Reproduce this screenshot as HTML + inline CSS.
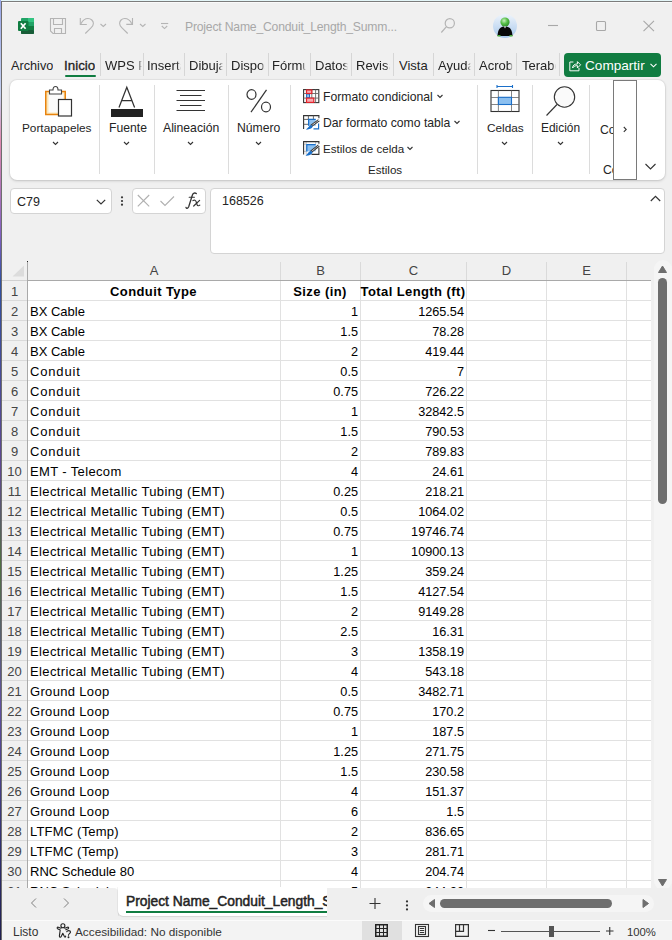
<!DOCTYPE html>
<html><head><meta charset="utf-8">
<style>
*{margin:0;padding:0;box-sizing:border-box}
html,body{width:672px;height:940px;overflow:hidden}
body{position:relative;background:#f0f0f0;font-family:"Liberation Sans",sans-serif;color:#242424}
.a{position:absolute}
svg{position:absolute;overflow:visible}
.ui{position:absolute;font-size:12.5px;white-space:nowrap;line-height:16px}
.tab{position:absolute;top:58px;font-size:13px;line-height:16px;white-space:nowrap;color:#242424;overflow:hidden;-webkit-mask-image:linear-gradient(to right,#000 calc(100% - 4px),transparent)}
.tab.nm{-webkit-mask-image:none}
.tsep{position:absolute;top:53px;width:1px;height:23px;background:#d6d6d6}
.rsep{position:absolute;top:85px;width:1px;height:89px;background:#dcdcdc}
.glab{position:absolute;font-size:12.2px;line-height:16px;white-space:nowrap;color:#242424}
/* grid */
#grid{position:absolute;left:0;top:0;width:672px;height:940px;overflow:hidden}
.rn{position:absolute;left:2px;width:25px;height:20px;padding-top:5px;line-height:14px;text-align:center;font-size:13px;color:#444}
.ct{position:absolute;height:20px;padding-top:4px;line-height:16px;font-size:13px;letter-spacing:0.4px;color:#000;white-space:nowrap}
.ct.r{text-align:right;font-size:12.7px;letter-spacing:0}
.ct.b{font-weight:bold;font-size:13px;-webkit-text-stroke:0}
.ch{position:absolute;top:262px;height:17px;line-height:17px;text-align:center;font-size:13px;color:#444}
</style></head><body>
<!-- window border -->
<div class="a" style="left:0;top:0;width:672px;height:1px;background:#e4f6f8"></div>
<div class="a" style="left:0;top:1px;width:672px;height:1px;background:#7c7c7c"></div>
<div class="a" style="left:0;top:0;width:1px;height:940px;background:linear-gradient(#9aa7e8,#c4d0f0 10%,#e08ab0 15%,#8060c0 25%,#3050a0 30%,#604890 50%,#507040 60%,#6050a0 75%,#303070 90%,#202050)"></div>
<div class="a" style="left:1px;top:1px;width:1px;height:939px;background:#6e6e6e"></div>
<div class="a" style="left:2px;top:2px;width:670px;height:1px;background:#fafafa"></div>

<!-- title bar -->
<svg style="left:18px;top:18px" width="17" height="16" viewBox="0 0 17 16">
  <rect x="3" y="0" width="13" height="16" rx="1" fill="#21a366"/>
  <rect x="10" y="0" width="6" height="4" fill="#33c481"/>
  <rect x="9" y="4" width="7" height="4" fill="#21a366"/>
  <rect x="3" y="8" width="13" height="4" fill="#107c41"/>
  <rect x="3" y="12" width="13" height="4" rx="1" fill="#185c37"/>
  <rect x="0" y="3" width="10.5" height="10" rx="1" fill="#107c41"/>
  <path d="M2.8 5.2 L7.6 10.8 M7.6 5.2 L2.8 10.8" stroke="#fff" stroke-width="1.7"/>
</svg>
<svg style="left:50px;top:18px" width="16" height="16" viewBox="0 0 16 16" fill="none" stroke="#b4b4b4" stroke-width="1.1">
  <path d="M0.5 0.5 H15.5 V15.5 H3 L0.5 13 Z"/>
  <path d="M3.5 0.5 V6.5 H12.5 V0.5"/>
  <path d="M4.5 15.5 V10.5 H11.5 V15.5"/>
</svg>
<svg style="left:79px;top:18px" width="30" height="16" viewBox="0 0 30 16" fill="none" stroke="#b4b4b4" stroke-width="1.1">
  <path d="M1.3 0 V6.5 H7.8"/>
  <path d="M2 5.7 C3.8 2 6.3 0.5 9 0.5 C12 0.5 14.4 2.8 14.4 5.6 C14.4 7.5 13.4 8.6 12 9.9 L6.3 15.5"/>
  <path d="M21.5 6 L24.3 8.5 L27 6"/>
</svg>
<svg style="left:119px;top:18px" width="30" height="16" viewBox="0 0 30 16" fill="none" stroke="#b4b4b4" stroke-width="1.1">
  <path d="M13.5 0 V6.4 H7.3"/>
  <path d="M12.8 5.7 C11 2 8.5 0.5 5.8 0.5 C2.8 0.5 0.6 2.8 0.6 5.6 C0.6 7.5 1.6 8.6 3 9.9 L8.7 15.5"/>
  <path d="M21 6 L23.8 8.5 L26.5 6"/>
</svg>
<svg style="left:160px;top:22px" width="9" height="8" viewBox="0 0 9 8" fill="none" stroke="#b4b4b4" stroke-width="1.1">
  <path d="M1 1.5 H8.2"/>
  <path d="M1.8 4 L4.5 6.6 L7.2 4"/>
</svg>
<div class="ui" style="left:185px;top:19px;font-size:12.2px;letter-spacing:-0.2px;color:#a8a8a8">Project Name_Conduit_Length_Summ...</div>
<svg style="left:440px;top:18px" width="16" height="16" viewBox="0 0 16 16" fill="none" stroke="#b4b4b4" stroke-width="1.2">
  <circle cx="9.8" cy="5.3" r="4.6"/>
  <path d="M6.5 8.6 L1.3 14.5"/>
</svg>
<!-- avatar -->
<svg style="left:493px;top:14px" width="24" height="24" viewBox="0 0 24 24">
  <defs>
    <linearGradient id="av" x1="0" y1="0" x2="0" y2="1"><stop offset="0" stop-color="#eef4fb"/><stop offset="1" stop-color="#a9c9ec"/></linearGradient>
    <radialGradient id="hd" cx="0.4" cy="0.35" r="0.7"><stop offset="0" stop-color="#c8f0c0"/><stop offset="0.5" stop-color="#58c048"/><stop offset="1" stop-color="#2c8a28"/></radialGradient>
  </defs>
  <circle cx="12" cy="12" r="12" fill="url(#av)"/>
  <path d="M4.5 22 C5 15 7 12.5 12 12.5 C17 12.5 19 15 19.5 22 Z" fill="#080808"/>
  <path d="M4.5 21 h3 v1.5 h-3z M16.5 21 h3 v1.5 h-3z" fill="#4cae3c"/>
  <circle cx="12" cy="8" r="4.6" fill="url(#hd)"/>
  <path d="M11 12.5 L12 14.5 L13 12.5" fill="#fff"/>
</svg>
<svg style="left:547px;top:20px" width="110" height="12" viewBox="0 0 110 12" fill="none" stroke="#a8a8a8" stroke-width="1.1">
  <path d="M1 5.5 H11"/>
  <rect x="49.5" y="1.5" width="9" height="9" rx="1"/>
  <path d="M96.5 0.8 L107 11.2 M107 0.8 L96.5 11.2"/>
</svg>

<!-- ribbon tabs -->
<div class="tab nm" style="left:11px;font-size:12.7px">Archivo</div>
<div class="tab nm" style="left:64px;font-size:13.4px;-webkit-text-stroke:0.3px #1f1f1f;color:#1f1f1f">Inicio</div>
<div class="a" style="left:65px;top:75px;width:31px;height:2px;background:#107c41;border-radius:1px"></div>
<div class="tsep" style="left:100px"></div>
<div class="tab" style="left:105px;width:37px">WPS PDF</div>
<div class="tsep" style="left:143px"></div>
<div class="tab" style="left:147px;width:34px">Insertar</div>
<div class="tsep" style="left:184px"></div>
<div class="tab" style="left:189px;width:34px">Dibujar</div>
<div class="tsep" style="left:226px"></div>
<div class="tab" style="left:231px;width:34px">Disposición</div>
<div class="tsep" style="left:268px"></div>
<div class="tab" style="left:272px;width:34px">Fórmulas</div>
<div class="tsep" style="left:310px"></div>
<div class="tab" style="left:315px;width:33px">Datos</div>
<div class="tsep" style="left:351px"></div>
<div class="tab" style="left:356px;width:34px">Revisar</div>
<div class="tsep" style="left:393px"></div>
<div class="tab nm" style="left:399px">Vista</div>
<div class="tsep" style="left:433px"></div>
<div class="tab" style="left:438px;width:33px">Ayuda</div>
<div class="tsep" style="left:474px"></div>
<div class="tab" style="left:479px;width:34px">Acrobat</div>
<div class="tsep" style="left:516px"></div>
<div class="tab" style="left:522px;width:34px">Terabox</div>
<div class="tsep" style="left:559px"></div>
<div class="a" style="left:564px;top:53px;width:97px;height:24px;background:#107c41;border-radius:4px"></div>
<svg style="left:568px;top:60px" width="14" height="12" viewBox="0 0 16 15" fill="none" stroke="#fff" stroke-width="1.2">
  <path d="M6 2.5 H1.5 V13.5 H13 V10"/>
  <path d="M5 10 C5 6 8 5 11 5 V2 L15 6 L11 10 V7 C9 7 6.5 7.5 5 10Z"/>
</svg>
<div class="ui" style="left:585px;top:58px;color:#fff;font-size:13.6px">Compartir</div>
<svg style="left:650px;top:63px" width="7" height="5" viewBox="0 0 7 5" fill="none" stroke="#fff" stroke-width="1.1"><path d="M0.5 0.8 L3.5 3.8 L6.5 0.8"/></svg>

<!-- ribbon -->
<div class="a" style="left:10px;top:80px;width:655px;height:100px;background:#fff;border-radius:7px;box-shadow:0 1px 3px rgba(0,0,0,0.16),0 0 0 1px rgba(0,0,0,0.04)"></div>
<!-- Portapapeles -->
<svg style="left:44px;top:86px" width="29" height="32" viewBox="0 0 29 32">
  <rect x="1.75" y="5.5" width="19.5" height="23" fill="#fce7b8" stroke="#e8830e" stroke-width="1.5"/>
  <rect x="4.5" y="7.5" width="15" height="19" fill="#fbfbfb"/>
  <path d="M5.5 8 V4 H9 C9 1.5 10 0.5 11.5 0.5 C13 0.5 14 1.5 14 4 H17.5 V8 Z" fill="#fff" stroke="#444" stroke-width="1.1"/>
  <rect x="14.5" y="13.5" width="13" height="16.5" fill="#fff" stroke="#333" stroke-width="1.2"/>
</svg>
<div class="glab" style="left:22px;top:120px;font-size:11.8px">Portapapeles</div>
<div class="rsep" style="left:99px"></div>
<!-- Fuente -->
<svg style="left:111px;top:86px" width="33" height="31" viewBox="0 0 33 31">
  <path d="M8 21.4 L15.8 1.2 L23.6 21.4 M11 14.7 H20.6" fill="none" stroke="#333" stroke-width="1.25"/>
  <rect x="0" y="23" width="32" height="8" fill="#222"/>
</svg>
<div class="glab" style="left:109px;top:120px">Fuente</div>
<div class="rsep" style="left:154px"></div>
<!-- Alineacion -->
<svg style="left:176px;top:89px" width="30" height="22" viewBox="0 0 30 22" fill="none" stroke="#333" stroke-width="1.1">
  <path d="M0.5 1.5 H29 M4 6.5 H25.5 M0.5 11.5 H29 M4 16.5 H25.5 M0.5 21.5 H29"/>
</svg>
<div class="glab" style="left:163px;top:120px">Alineación</div>
<div class="rsep" style="left:228px"></div>
<!-- Numero -->
<svg style="left:246px;top:89px" width="26" height="24" viewBox="0 0 26 24" fill="none" stroke="#333" stroke-width="1.2">
  <ellipse cx="5.5" cy="5.5" rx="4.5" ry="4.8"/>
  <ellipse cx="20" cy="18" rx="4.5" ry="4.8"/>
  <path d="M20.5 0.8 L5 23.2"/>
</svg>
<div class="glab" style="left:237px;top:120px">Número</div>
<div class="rsep" style="left:290px"></div>
<!-- chevrons -->
<svg style="left:0;top:0" width="672" height="180" viewBox="0 0 672 180" fill="none" stroke="#333" stroke-width="1.1">
  <path d="M53 142 L55.5 144.5 L58 142"/>
  <path d="M124 142 L126.5 144.5 L129 142"/>
  <path d="M188 142 L190.5 144.5 L193 142"/>
  <path d="M256 142 L258.5 144.5 L261 142"/>
  <path d="M502 142 L504.5 144.5 L507 142"/>
  <path d="M558 142 L560.5 144.5 L563 142"/>
  <path d="M437.5 95 L440 97.5 L442.5 95"/>
  <path d="M454.5 121 L457 123.5 L459.5 121"/>
  <path d="M407.5 147 L410 149.5 L412.5 147"/>
  <path d="M645.5 164 L650.5 169 L655.5 164"/>
</svg>
<!-- Estilos -->
<svg style="left:303px;top:89px" width="17" height="15" viewBox="0 0 17 15" fill="none">
  <rect x="0.6" y="0.6" width="15.2" height="13" fill="#fff" stroke="#333" stroke-width="1.1"/>
  <path d="M12.6 0.6 V13.6 M8.8 0.6 V13.6 M0.6 4.5 H15.8 M0.6 9.1 H15.8" stroke="#666" stroke-width="0.9"/>
  <rect x="3.6" y="4.9" width="2.9" height="3.8" fill="#a0ccf4" stroke="#1a6fc9" stroke-width="1.1"/>
  <rect x="3.5" y="1" width="5.3" height="3.5" fill="#f7a8b0" stroke="#e3242b" stroke-width="1.2"/>
  <rect x="3.5" y="9.1" width="7.3" height="4.3" fill="#f7a8b0" stroke="#e3242b" stroke-width="1.2"/>
</svg>
<svg style="left:303px;top:115px" width="17" height="15" viewBox="0 0 17 15" fill="none">
  <path d="M0.6 14 V0.6 H15.9 V3.2" stroke="#333" stroke-width="1.1"/>
  <path d="M5.4 0.6 V4.2 M10.4 0.6 V4.2 M0.6 4.4 H5.2 M0.6 9.3 H5.2" stroke="#555" stroke-width="0.9"/>
  <rect x="5.2" y="4" width="7.5" height="6.8" fill="#8cc0f0"/>
  <path d="M5.6 10.8 V4.3 H12.7" stroke="#1a6fc9" stroke-width="1.2"/>
  <path d="M15.6 8.5 V13.9 H10.5" stroke="#1a6fc9" stroke-width="1.2"/>
  <path d="M15.9 5.2 L8 11" stroke="#3a3a3a" stroke-width="2.6"/>
  <path d="M15.9 5.2 L8 11" stroke="#fff" stroke-width="1" stroke-dasharray="1 0.6"/>
  <path d="M3 14.6 C5.5 14.8 8.8 14 9.8 11.6 L8.2 10 C6 10.4 5.6 12.6 3 14.6Z" fill="#1a6fc9"/>
</svg>
<svg style="left:303px;top:141px" width="17" height="15" viewBox="0 0 17 15" fill="none">
  <path d="M3.2 0.6 V13.4 M12.7 0.6 V3 M0.6 3.2 H3.2 M0.6 10.4 H3.2" stroke="#bbb" stroke-width="0.9"/>
  <path d="M0.6 13.6 V0.6 H15.9 V2.8 M15.9 6.5 V13.4 H8.5" stroke="#333" stroke-width="1.1"/>
  <rect x="3.4" y="3.2" width="9.3" height="7.2" fill="#8cc0f0"/>
  <path d="M3.8 10.4 V3.6 H12.7" stroke="#1a6fc9" stroke-width="1.2"/>
  <path d="M15.9 4.4 L8 10.8" stroke="#3a3a3a" stroke-width="2.6"/>
  <path d="M15.9 4.4 L8 10.8" stroke="#fff" stroke-width="1" stroke-dasharray="1 0.6"/>
  <path d="M2.5 14.6 C5 14.8 8.5 14 9.6 11.4 L8 9.8 C5.8 10.2 5.2 12.6 2.5 14.6Z" fill="#1a6fc9"/>
</svg>
<div class="glab" style="left:323px;top:89px;font-size:12.2px">Formato condicional</div>
<div class="glab" style="left:323px;top:115px;font-size:12.2px">Dar formato como tabla</div>
<div class="glab" style="left:323px;top:141px;font-size:11.6px">Estilos de celda</div>
<div class="glab" style="left:368px;top:162px;font-size:11.6px">Estilos</div>
<div class="rsep" style="left:477px"></div>
<!-- Celdas -->
<svg style="left:490px;top:85px" width="30" height="28" viewBox="0 0 30 28">
  <path d="M7 1.5 H22.5 M7 0 V3 M22.5 0 V3" stroke="#1a6fc9" stroke-width="1.1" fill="none"/>
  <rect x="1" y="5.5" width="28" height="21" fill="#fff" stroke="#333" stroke-width="1.1"/>
  <path d="M8.4 5.5 V26.5 M21.5 5.5 V26.5 M1 12.5 H29 M1 19.5 H29" stroke="#666" stroke-width="0.8" fill="none"/>
  <rect x="8.4" y="12.3" width="13.1" height="7.2" fill="#8cc0f0" stroke="#1a6fc9" stroke-width="1.1"/>
</svg>
<div class="glab" style="left:487px;top:120px;font-size:11.8px">Celdas</div>
<div class="rsep" style="left:532px"></div>
<!-- Edicion -->
<svg style="left:545px;top:86px" width="32" height="31" viewBox="0 0 32 31" fill="none" stroke="#333" stroke-width="1.1">
  <circle cx="19.5" cy="11" r="10.2" fill="#fafafa"/>
  <path d="M12 18.5 L1.5 29.5"/>
</svg>
<div class="glab" style="left:541px;top:120px;font-size:11.9px">Edición</div>
<div class="rsep" style="left:589px"></div>
<div class="glab" style="left:600px;top:122px;width:13px;overflow:hidden">Co</div>
<div class="glab" style="left:603px;top:162px;width:10px;overflow:hidden">Co</div>
<div class="a" style="left:613px;top:80px;width:24px;height:100px;background:#fff;border:1px solid #7a7a7a"></div>
<svg style="left:623px;top:126px" width="5" height="8" viewBox="0 0 5 8" fill="none" stroke="#333" stroke-width="1.1"><path d="M0.8 1 L3.2 3.4 L0.8 5.8"/></svg>

<!-- formula bar -->
<div class="a" style="left:10px;top:188px;width:102px;height:26px;background:#fff;border:1px solid #d4d4d4;border-radius:4px"></div>
<div class="ui" style="left:17px;top:194px;font-size:12.5px;color:#242424">C79</div>
<svg style="left:96px;top:199px" width="10" height="6" viewBox="0 0 10 6" fill="none" stroke="#333" stroke-width="1.2"><path d="M0.8 0.8 L5 5 L9.2 0.8"/></svg>
<svg style="left:120px;top:196px" width="4" height="10" viewBox="0 0 4 10" fill="#333"><circle cx="2" cy="1.3" r="1.1"/><circle cx="2" cy="5" r="1.1"/><circle cx="2" cy="8.7" r="1.1"/></svg>
<div class="a" style="left:132px;top:188px;width:74px;height:26px;background:#fff;border:1px solid #d4d4d4;border-radius:4px"></div>
<svg style="left:137px;top:194px" width="66" height="14" viewBox="0 0 66 14" fill="none" stroke="#b0b0b0" stroke-width="1.1">
  <path d="M0.8 1 L12.2 12.4 M12.2 1 L0.8 12.4"/>
  <path d="M23.5 7 L28 11.5 L37 2.5"/>
</svg>
<svg style="left:180px;top:190px" width="30" height="22" viewBox="0 0 30 22" fill="none" stroke="#333" stroke-linecap="round">
  <path d="M6 17.3 C6.4 18.9 7.9 18.7 8.7 16.8 L12.4 5 C13.1 3 14.9 2.5 16.3 3.6" stroke-width="1.3"/>
  <path d="M9.2 7.3 H14.4" stroke-width="1.1"/>
  <path d="M13 10.6 C14.5 9.7 15.6 10.1 16.1 11.6 L17.1 14.7 C17.6 16 18.7 16.1 19.8 15.1" stroke-width="1.2"/>
  <path d="M19.6 10.4 L13.7 16" stroke-width="1.2"/>
</svg>
<div class="a" style="left:210px;top:188px;width:455px;height:66px;background:#fff;border:1px solid #d4d4d4;border-radius:4px"></div>
<div class="ui" style="left:222px;top:193px;font-size:12.5px;color:#242424">168526</div>
<svg style="left:650px;top:195px" width="11" height="7" viewBox="0 0 11 7" fill="none" stroke="#333" stroke-width="1.2"><path d="M0.8 6 L5.5 1.3 L10.2 6"/></svg>

<!-- GRID -->
<div class="a" style="left:28px;top:281px;width:623px;height:607px;background:#fff"></div>
<svg style="left:0;top:0" width="672" height="940" viewBox="0 0 672 940">
  <g stroke="#e1e1e1" stroke-width="1">
    <path d="M280.5 281 V888 M360.5 281 V888 M466.5 281 V888 M546.5 281 V888 M626.5 281 V888"/>
    <path d="M28 300.5 H651 M28 320.5 H651 M28 340.5 H651 M28 360.5 H651 M28 380.5 H651 M28 400.5 H651 M28 420.5 H651 M28 440.5 H651 M28 460.5 H651 M28 480.5 H651 M28 500.5 H651 M28 520.5 H651 M28 540.5 H651 M28 560.5 H651 M28 580.5 H651 M28 600.5 H651 M28 620.5 H651 M28 640.5 H651 M28 660.5 H651 M28 680.5 H651 M28 700.5 H651 M28 720.5 H651 M28 740.5 H651 M28 760.5 H651 M28 780.5 H651 M28 800.5 H651 M28 820.5 H651 M28 840.5 H651 M28 860.5 H651 M28 880.5 H651"/>
  </g>
  <g stroke="#dadada" stroke-width="1">
    <path d="M2 300.5 H27 M2 320.5 H27 M2 340.5 H27 M2 360.5 H27 M2 380.5 H27 M2 400.5 H27 M2 420.5 H27 M2 440.5 H27 M2 460.5 H27 M2 480.5 H27 M2 500.5 H27 M2 520.5 H27 M2 540.5 H27 M2 560.5 H27 M2 580.5 H27 M2 600.5 H27 M2 620.5 H27 M2 640.5 H27 M2 660.5 H27 M2 680.5 H27 M2 700.5 H27 M2 720.5 H27 M2 740.5 H27 M2 760.5 H27 M2 780.5 H27 M2 800.5 H27 M2 820.5 H27 M2 840.5 H27 M2 860.5 H27 M2 880.5 H27"/>
    <path d="M280.5 262 V280 M360.5 262 V280 M466.5 262 V280 M546.5 262 V280 M626.5 262 V280"/>
  </g>
  <path d="M27.5 262 V888" stroke="#a9a9a9"/><rect x="27" y="261" width="1" height="1" fill="#222"/>
  <path d="M2 280.5 H27" stroke="#d0d0d0"/><path d="M27 280.5 H651" stroke="#a9a9a9"/>
  <path d="M12.5 276.5 H24 V265.5 Z" fill="#dcdcdc"/>
</svg>
<div class="ch" style="left:28px;width:252px">A</div>
<div class="ch" style="left:281px;width:79px">B</div>
<div class="ch" style="left:361px;width:105px">C</div>
<div class="ch" style="left:467px;width:79px">D</div>
<div class="ch" style="left:547px;width:79px">E</div>
<div id="grid">
<div class="rn" style="top:280px">1</div>
<div class="ct b" style="top:280px;left:27px;width:253px;text-align:center">Conduit Type</div>
<div class="ct b" style="top:280px;left:280px;width:80px;text-align:center">Size (in)</div>
<div class="ct b" style="top:280px;left:360px;width:106px;text-align:center">Total Length (ft)</div>
<div class="rn" style="top:300px">2</div>
<div class="ct" style="top:300px;left:30px;letter-spacing:0.0px">BX Cable</div>
<div class="ct r" style="top:300px;left:280px;width:78px">1</div>
<div class="ct r" style="top:300px;left:360px;width:104px">1265.54</div>
<div class="rn" style="top:320px">3</div>
<div class="ct" style="top:320px;left:30px;letter-spacing:0.0px">BX Cable</div>
<div class="ct r" style="top:320px;left:280px;width:78px">1.5</div>
<div class="ct r" style="top:320px;left:360px;width:104px">78.28</div>
<div class="rn" style="top:340px">4</div>
<div class="ct" style="top:340px;left:30px;letter-spacing:0.0px">BX Cable</div>
<div class="ct r" style="top:340px;left:280px;width:78px">2</div>
<div class="ct r" style="top:340px;left:360px;width:104px">419.44</div>
<div class="rn" style="top:360px">5</div>
<div class="ct" style="top:360px;left:30px;letter-spacing:0.83px">Conduit</div>
<div class="ct r" style="top:360px;left:280px;width:78px">0.5</div>
<div class="ct r" style="top:360px;left:360px;width:104px">7</div>
<div class="rn" style="top:380px">6</div>
<div class="ct" style="top:380px;left:30px;letter-spacing:0.83px">Conduit</div>
<div class="ct r" style="top:380px;left:280px;width:78px">0.75</div>
<div class="ct r" style="top:380px;left:360px;width:104px">726.22</div>
<div class="rn" style="top:400px">7</div>
<div class="ct" style="top:400px;left:30px;letter-spacing:0.83px">Conduit</div>
<div class="ct r" style="top:400px;left:280px;width:78px">1</div>
<div class="ct r" style="top:400px;left:360px;width:104px">32842.5</div>
<div class="rn" style="top:420px">8</div>
<div class="ct" style="top:420px;left:30px;letter-spacing:0.83px">Conduit</div>
<div class="ct r" style="top:420px;left:280px;width:78px">1.5</div>
<div class="ct r" style="top:420px;left:360px;width:104px">790.53</div>
<div class="rn" style="top:440px">9</div>
<div class="ct" style="top:440px;left:30px;letter-spacing:0.83px">Conduit</div>
<div class="ct r" style="top:440px;left:280px;width:78px">2</div>
<div class="ct r" style="top:440px;left:360px;width:104px">789.83</div>
<div class="rn" style="top:460px">10</div>
<div class="ct" style="top:460px;left:30px;letter-spacing:0.36px">EMT - Telecom</div>
<div class="ct r" style="top:460px;left:280px;width:78px">4</div>
<div class="ct r" style="top:460px;left:360px;width:104px">24.61</div>
<div class="rn" style="top:480px">11</div>
<div class="ct" style="top:480px;left:30px;letter-spacing:0.38px">Electrical Metallic Tubing (EMT)</div>
<div class="ct r" style="top:480px;left:280px;width:78px">0.25</div>
<div class="ct r" style="top:480px;left:360px;width:104px">218.21</div>
<div class="rn" style="top:500px">12</div>
<div class="ct" style="top:500px;left:30px;letter-spacing:0.38px">Electrical Metallic Tubing (EMT)</div>
<div class="ct r" style="top:500px;left:280px;width:78px">0.5</div>
<div class="ct r" style="top:500px;left:360px;width:104px">1064.02</div>
<div class="rn" style="top:520px">13</div>
<div class="ct" style="top:520px;left:30px;letter-spacing:0.38px">Electrical Metallic Tubing (EMT)</div>
<div class="ct r" style="top:520px;left:280px;width:78px">0.75</div>
<div class="ct r" style="top:520px;left:360px;width:104px">19746.74</div>
<div class="rn" style="top:540px">14</div>
<div class="ct" style="top:540px;left:30px;letter-spacing:0.38px">Electrical Metallic Tubing (EMT)</div>
<div class="ct r" style="top:540px;left:280px;width:78px">1</div>
<div class="ct r" style="top:540px;left:360px;width:104px">10900.13</div>
<div class="rn" style="top:560px">15</div>
<div class="ct" style="top:560px;left:30px;letter-spacing:0.38px">Electrical Metallic Tubing (EMT)</div>
<div class="ct r" style="top:560px;left:280px;width:78px">1.25</div>
<div class="ct r" style="top:560px;left:360px;width:104px">359.24</div>
<div class="rn" style="top:580px">16</div>
<div class="ct" style="top:580px;left:30px;letter-spacing:0.38px">Electrical Metallic Tubing (EMT)</div>
<div class="ct r" style="top:580px;left:280px;width:78px">1.5</div>
<div class="ct r" style="top:580px;left:360px;width:104px">4127.54</div>
<div class="rn" style="top:600px">17</div>
<div class="ct" style="top:600px;left:30px;letter-spacing:0.38px">Electrical Metallic Tubing (EMT)</div>
<div class="ct r" style="top:600px;left:280px;width:78px">2</div>
<div class="ct r" style="top:600px;left:360px;width:104px">9149.28</div>
<div class="rn" style="top:620px">18</div>
<div class="ct" style="top:620px;left:30px;letter-spacing:0.38px">Electrical Metallic Tubing (EMT)</div>
<div class="ct r" style="top:620px;left:280px;width:78px">2.5</div>
<div class="ct r" style="top:620px;left:360px;width:104px">16.31</div>
<div class="rn" style="top:640px">19</div>
<div class="ct" style="top:640px;left:30px;letter-spacing:0.38px">Electrical Metallic Tubing (EMT)</div>
<div class="ct r" style="top:640px;left:280px;width:78px">3</div>
<div class="ct r" style="top:640px;left:360px;width:104px">1358.19</div>
<div class="rn" style="top:660px">20</div>
<div class="ct" style="top:660px;left:30px;letter-spacing:0.38px">Electrical Metallic Tubing (EMT)</div>
<div class="ct r" style="top:660px;left:280px;width:78px">4</div>
<div class="ct r" style="top:660px;left:360px;width:104px">543.18</div>
<div class="rn" style="top:680px">21</div>
<div class="ct" style="top:680px;left:30px;letter-spacing:0.33px">Ground Loop</div>
<div class="ct r" style="top:680px;left:280px;width:78px">0.5</div>
<div class="ct r" style="top:680px;left:360px;width:104px">3482.71</div>
<div class="rn" style="top:700px">22</div>
<div class="ct" style="top:700px;left:30px;letter-spacing:0.33px">Ground Loop</div>
<div class="ct r" style="top:700px;left:280px;width:78px">0.75</div>
<div class="ct r" style="top:700px;left:360px;width:104px">170.2</div>
<div class="rn" style="top:720px">23</div>
<div class="ct" style="top:720px;left:30px;letter-spacing:0.33px">Ground Loop</div>
<div class="ct r" style="top:720px;left:280px;width:78px">1</div>
<div class="ct r" style="top:720px;left:360px;width:104px">187.5</div>
<div class="rn" style="top:740px">24</div>
<div class="ct" style="top:740px;left:30px;letter-spacing:0.33px">Ground Loop</div>
<div class="ct r" style="top:740px;left:280px;width:78px">1.25</div>
<div class="ct r" style="top:740px;left:360px;width:104px">271.75</div>
<div class="rn" style="top:760px">25</div>
<div class="ct" style="top:760px;left:30px;letter-spacing:0.33px">Ground Loop</div>
<div class="ct r" style="top:760px;left:280px;width:78px">1.5</div>
<div class="ct r" style="top:760px;left:360px;width:104px">230.58</div>
<div class="rn" style="top:780px">26</div>
<div class="ct" style="top:780px;left:30px;letter-spacing:0.33px">Ground Loop</div>
<div class="ct r" style="top:780px;left:280px;width:78px">4</div>
<div class="ct r" style="top:780px;left:360px;width:104px">151.37</div>
<div class="rn" style="top:800px">27</div>
<div class="ct" style="top:800px;left:30px;letter-spacing:0.33px">Ground Loop</div>
<div class="ct r" style="top:800px;left:280px;width:78px">6</div>
<div class="ct r" style="top:800px;left:360px;width:104px">1.5</div>
<div class="rn" style="top:820px">28</div>
<div class="ct" style="top:820px;left:30px;letter-spacing:0.19px">LTFMC (Temp)</div>
<div class="ct r" style="top:820px;left:280px;width:78px">2</div>
<div class="ct r" style="top:820px;left:360px;width:104px">836.65</div>
<div class="rn" style="top:840px">29</div>
<div class="ct" style="top:840px;left:30px;letter-spacing:0.19px">LTFMC (Temp)</div>
<div class="ct r" style="top:840px;left:280px;width:78px">3</div>
<div class="ct r" style="top:840px;left:360px;width:104px">281.71</div>
<div class="rn" style="top:860px">30</div>
<div class="ct" style="top:860px;left:30px;letter-spacing:0.01px">RNC Schedule 80</div>
<div class="ct r" style="top:860px;left:280px;width:78px">4</div>
<div class="ct r" style="top:860px;left:360px;width:104px">204.74</div>
<div class="rn" style="top:880px">31</div>
<div class="ct" style="top:880px;left:30px;letter-spacing:0.01px">RNC Schedule 80</div>
<div class="ct r" style="top:880px;left:280px;width:78px">5</div>
<div class="ct r" style="top:880px;left:360px;width:104px">244.92</div>
</div>
<!-- vertical scrollbar -->
<div class="a" style="left:654px;top:260px;width:18px;height:630px;background:#f5f5f5;border-radius:9px"></div>
<svg style="left:654px;top:260px" width="18" height="630" viewBox="0 0 18 630" fill="#6e6e6e">
  <path d="M4.5 12.5 L8.5 6 L12.5 12.5 Z" stroke="#6e6e6e" stroke-width="1" stroke-linejoin="round"/>
  <rect x="4" y="18" width="9" height="226" rx="4.5"/>
  <path d="M4.5 619.5 L8.5 626 L12.5 619.5 Z" stroke="#6e6e6e" stroke-width="1" stroke-linejoin="round"/>
</svg>
<!-- sheet bar -->
<div class="a" style="left:100px;top:888px;width:30px;height:10px;background:#fff"></div>
<div class="a" style="left:2px;top:888px;width:116px;height:32px;background:#efefef;border-radius:0 5px 0 0;box-shadow:1px 0 0 rgba(0,0,0,0.05)"></div>
<div class="a" style="left:2px;top:916px;width:670px;height:4px;background:#efefef"></div>
<svg style="left:0;top:888px" width="120" height="32" viewBox="0 0 120 32" fill="none" stroke="#808080" stroke-width="1">
  <path d="M36 10.5 L31.5 15 L36 19.5"/>
  <path d="M64 10.5 L68.5 15 L64 19.5" />
</svg>
<div class="a" style="left:118px;top:887px;width:216px;height:29px;background:#fff;border-radius:0 0 5px 5px;box-shadow:0 1px 1px rgba(0,0,0,0.10),-1px 0 0 rgba(0,0,0,0.04)"></div>
<div class="a" style="left:126px;top:894px;width:201px;overflow:hidden;white-space:nowrap;font-size:13.8px;-webkit-text-stroke:0.5px #242424;line-height:16px;color:#242424">Project Name_Conduit_Length_Summary</div>
<div class="a" style="left:126px;top:911px;width:201px;height:2px;background:#107c41"></div>
<div class="a" style="left:327px;top:888px;width:345px;height:32px;background:#efefef"></div>
<svg style="left:0;top:888px" width="672" height="32" viewBox="0 0 672 32" fill="none" stroke="#333" stroke-width="1.1">
  <path d="M375 10 V21 M369.5 15.5 H380.5"/>
</svg>
<svg style="left:405px;top:900px" width="4" height="11" viewBox="0 0 4 11" fill="#333"><circle cx="2" cy="1.4" r="1.1"/><circle cx="2" cy="5.4" r="1.1"/><circle cx="2" cy="9.4" r="1.1"/></svg>
<div class="a" style="left:423px;top:895px;width:231px;height:17px;background:#f5f5f5;border-radius:9px"></div>
<svg style="left:423px;top:895px" width="231" height="17" viewBox="0 0 231 17" fill="#6e6e6e">
  <path d="M11.5 4.5 L6 8.5 L11.5 12.5 Z" stroke="#6e6e6e" stroke-linejoin="round"/>
  <rect x="17" y="4" width="172" height="9" rx="4.5"/>
  <path d="M220 4.5 L225.5 8.5 L220 12.5 Z" stroke="#6e6e6e" stroke-linejoin="round"/>
</svg>
<!-- status bar -->
<div class="a" style="left:2px;top:920px;width:670px;height:1px;background:#fbfbfb"></div>
<div class="a" style="left:2px;top:921px;width:670px;height:19px;background:#f3f3f3"></div>
<div class="ui" style="left:13px;top:924px;font-size:12px;color:#333">Listo</div>
<svg style="left:52px;top:920px" width="24" height="20" viewBox="0 0 24 20" fill="none" stroke="#222" stroke-width="1.1" stroke-linejoin="round" stroke-linecap="round">
  <circle cx="10.9" cy="5.8" r="2"/>
  <path d="M9 8.2 L6.3 7.2 C5.3 6.9 4.7 8.1 5.6 8.7 L8.2 10 L7.4 15.8 C7.2 17.3 8.6 17.8 9.2 16.5 L10.8 13.2 L12.4 16.5 C13 17.6 13.8 17 13.6 16"/>
  <path d="M12.8 8.2 L15.5 7.2 C16.5 6.9 17.1 8.1 16.2 8.7 L13.8 9.8"/>
  <path d="M14.8 11.8 C14.8 10.2 18.5 10.2 18.5 11.9 C18.5 13.3 16.5 13.4 16.5 15.3"/>
  <circle cx="16.5" cy="17.3" r="0.4" fill="#222"/>
</svg>
<div class="ui" style="left:75px;top:924px;font-size:11.8px;color:#333">Accesibilidad: No disponible</div>
<div class="a" style="left:362px;top:921px;width:40px;height:19px;background:#e0e0e0"></div>
<svg style="left:375px;top:924px" width="13" height="13" viewBox="0 0 13 13" fill="none" stroke="#222">
  <rect x="0.75" y="0.75" width="11.5" height="11.5" stroke-width="1.5"/>
  <path d="M4.5 0.5 V12.5 M8.5 0.5 V12.5 M0.5 4.5 H12.5 M0.5 8.5 H12.5" stroke-width="1"/>
</svg>
<svg style="left:415px;top:924px" width="14" height="13" viewBox="0 0 14 13" fill="none" stroke="#333" stroke-width="1.1">
  <rect x="0.5" y="0.5" width="13" height="12"/>
  <rect x="3.5" y="2.5" width="7" height="8"/>
  <path d="M5.2 4.5 H8.8 M5.2 6.5 H8.8 M5.2 8.5 H8.8" stroke-width="1" stroke-linecap="round"/>
</svg>
<svg style="left:455px;top:924px" width="14" height="13" viewBox="0 0 14 13" fill="none" stroke="#333" stroke-width="1.1">
  <path d="M0.6 0.6 H13.4 V12.4 H0.6 Z M4.5 0.6 V7.3 M8.5 0.6 V7.3 H0.6" stroke-width="1.2"/>
</svg>
<svg style="left:486px;top:924px" width="130" height="14" viewBox="0 0 130 14" fill="none" stroke="#333" stroke-width="1.1">
  <path d="M2 6.5 H9"/>
  <path d="M15 7.5 H114" stroke="#555"/>
  <rect x="63" y="2" width="5" height="11" fill="#555" stroke="none"/>
  <path d="M120 7 H127.5 M123.75 3 V11"/>
</svg>
<div class="ui" style="left:627px;top:924px;font-size:11.3px;color:#333">100%</div>
</body></html>
